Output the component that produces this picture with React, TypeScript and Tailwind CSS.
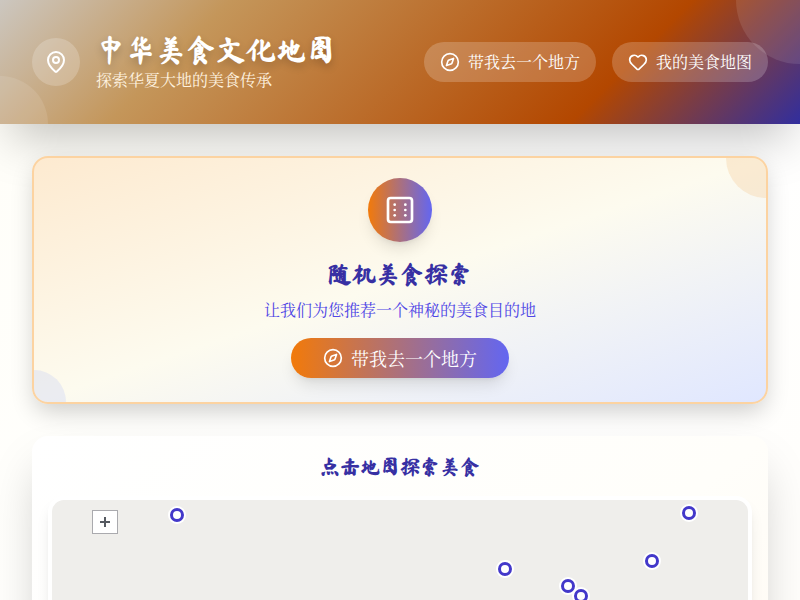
import { Compass, Dice6, Heart, MapPin } from "lucide-react";

const places = [
  { name: "乌鲁木齐", left: 17.96, top: 15 },
  { name: "哈尔滨", left: 91.52, top: 13 },
  { name: "兰州", left: 65.09, top: 69 },
  { name: "大连", left: 86.21, top: 61 },
  { name: "西安", left: 74.14, top: 86 },
  { name: "洛阳", left: 76.01, top: 96 },
];

export default function App() {
  return (
    <div className="min-h-screen overflow-hidden bg-linear-to-br from-[#fffef8] via-white to-[#fffdf8] font-['Noto_Serif_CJK_SC','Noto_Sans_CJK_SC',serif]">
      <header className="relative bg-[linear-gradient(135deg,#ccc7c0_0%,#c4965a_25%,#b34700_75%,#312e9e_100%)] shadow-[0_25px_50px_-12px_rgba(0,0,0,0.25)]">
        <div className="pointer-events-none absolute inset-0 overflow-hidden">
          <div className="absolute -top-16 -right-16 size-32 rounded-full bg-white/10" />
          <div className="absolute -bottom-12 -left-12 size-24 rounded-full bg-white/10" />
        </div>
        <div className="relative flex items-center justify-between px-8 py-8">
          <div className="flex items-center gap-4">
            <div className="flex size-12 items-center justify-center rounded-full bg-white/20 text-white">
              <MapPin size={24} />
            </div>
            <div>
              <h1 className="font-['Ma_Shan_Zheng','Noto_Serif_CJK_SC','Noto_Sans_CJK_SC',cursive] text-[30px] leading-9 font-bold text-white [text-shadow:0_4px_8px_rgba(0,0,0,0.2)]">
                中华美食文化地图
              </h1>
              <p className="text-base leading-6 text-[#fff3e0]">探索华夏大地的美食传承</p>
            </div>
          </div>
          <nav className="flex items-center gap-4">
            <button className="flex h-10 items-center gap-2 rounded-full bg-white/20 px-4 text-base text-white">
              <Compass size={20} />
              带我去一个地方
            </button>
            <button className="flex h-10 items-center gap-2 rounded-full bg-white/20 px-4 text-base text-white">
              <Heart size={20} />
              我的美食地图
            </button>
          </nav>
        </div>
      </header>

      <main className="flex flex-col gap-8 p-8">
        <section className="relative flex flex-col items-center overflow-hidden rounded-2xl border-2 border-[#fcd3a1] bg-linear-to-br/srgb from-[#fdead0] via-[#fdfbef] to-[#e0e7ff] px-6 pt-5 pb-6 shadow-[0_10px_25px_-3px_rgba(0,0,0,0.2)]">
          <div className="absolute -top-10 -right-10 size-20 rounded-full bg-[#f4c690]/30" />
          <div className="absolute -bottom-8 -left-8 size-16 rounded-full bg-[#a5b4fc]/20" />
          <div className="mb-4 flex size-16 items-center justify-center rounded-full bg-linear-to-r/srgb from-[#f27a0a] to-[#6366f1] text-white shadow-lg">
            <Dice6 size={32} />
          </div>
          <h2 className="mb-2 font-['Ma_Shan_Zheng','Noto_Serif_CJK_SC','Noto_Sans_CJK_SC',cursive] text-2xl leading-8 font-bold text-[#3730a3]">
            随机美食探索
          </h2>
          <p className="mb-4 text-base leading-6 text-[#4f46e5]">让我们为您推荐一个神秘的美食目的地</p>
          <button className="flex h-10 items-center gap-2 rounded-full bg-linear-to-r/srgb from-[#f27a0a] to-[#6366f1] px-8 text-lg text-white shadow-lg">
            <Compass size={20} />
            带我去一个地方
          </button>
        </section>

        <section className="rounded-2xl bg-linear-to-br from-white via-[#fffefa] to-[#fff7ed] p-4 shadow-[0_25px_50px_-12px_rgba(0,0,0,0.25)]">
          <h2 className="mb-4 text-center font-['Ma_Shan_Zheng','Noto_Serif_CJK_SC','Noto_Sans_CJK_SC',cursive] text-xl leading-7 font-bold text-[#3730a3]">
            点击地图探索美食
          </h2>
          <div className="relative h-[500px] overflow-hidden rounded-2xl border-4 border-white bg-[#efeeeb] shadow-lg">
            <button
              aria-label="放大"
              className="absolute top-2.5 left-10 flex h-6 w-[26px] items-center justify-center border border-[#aaaaae] bg-white"
            >
              <svg viewBox="0 0 10 10" className="size-2.5" stroke="#565a61" strokeWidth="2" aria-hidden="true">
                <path d="M5 0V10M0 5H10" />
              </svg>
            </button>
            {places.map((place) => (
              <button
                key={place.name}
                aria-label={place.name}
                className="absolute size-3.5 -translate-1/2 rounded-full border-3 border-[#4338ca] bg-white ring-2 ring-white"
                style={{ left: `${place.left}%`, top: place.top }}
              />
            ))}
          </div>
        </section>
      </main>
    </div>
  );
}
